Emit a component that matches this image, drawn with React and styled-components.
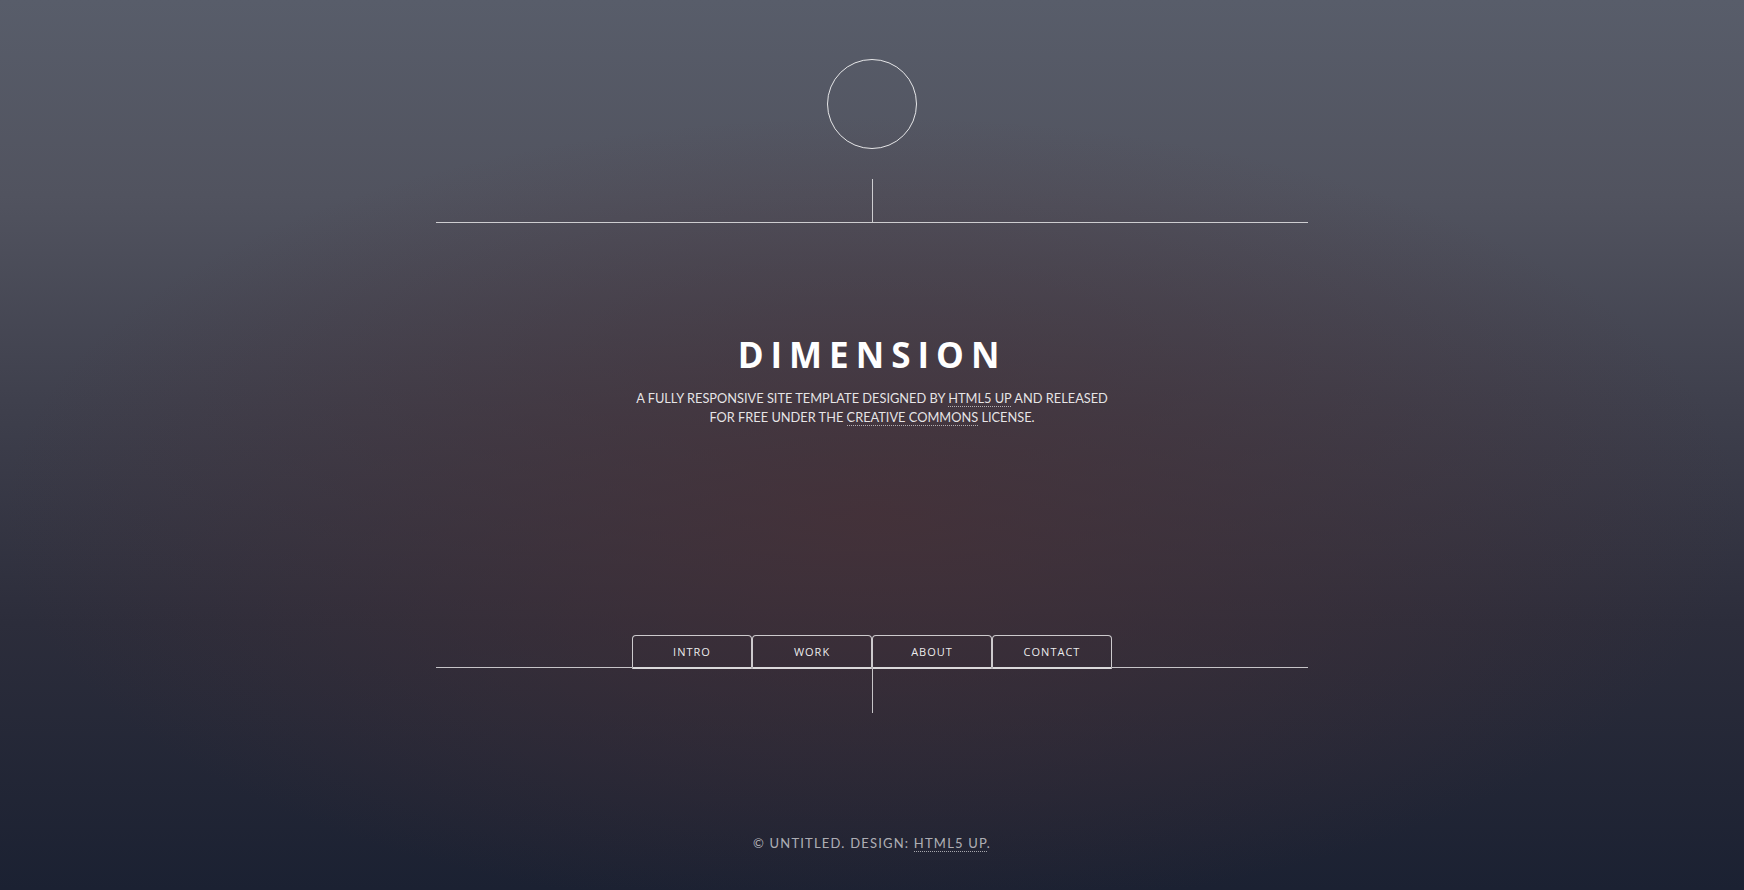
import React from "react";
import styled, { createGlobalStyle } from "styled-components";

const Global = createGlobalStyle`
  html, body { margin: 0; padding: 0; }
  body {
    background: #1b2030;
    font-family: Lato, "Open Sans", sans-serif;
    color: #fff;
  }
`;

const Page = styled.div`
  position: relative;
  min-height: 890px;
  display: flex;
  flex-direction: column;
  align-items: center;
  background:
    radial-gradient(ellipse 50% 45% at 50% 58%, rgba(72, 48, 54, 0.75), rgba(72, 48, 54, 0) 100%),
    linear-gradient(to bottom, #585d6a 0%, #51535f 22%, #3f404d 45%, #2c2d3b 70%, #1b2132 100%);
  overflow: hidden;
`;

const Logo = styled.div`
  margin-top: 59px;
  width: 88px;
  height: 88px;
  border: 1px solid rgba(255, 255, 255, 0.85);
  border-radius: 50%;
`;

const Stem = styled.div`
  width: 1px;
  height: ${(p) => p.$h}px;
  margin-top: ${(p) => p.$mt || 0}px;
  background: rgba(255, 255, 255, 0.72);
`;

const Content = styled.div`
  width: 872px;
  height: 413px;
  border-top: 1px solid rgba(255, 255, 255, 0.72);
  box-sizing: border-box;
  display: flex;
  flex-direction: column;
  align-items: center;
  padding-top: 108px;
`;

const Title = styled.h1`
  margin: 0;
  font-family: "Open Sans", sans-serif;
  font-weight: 700;
  font-size: 35px;
  line-height: 48px;
  letter-spacing: 7px;
  color: #fff;
`;

const Sub = styled.p`
  margin: 10px 0 0;
  font-family: Lato, sans-serif;
  font-size: 12.8px;
  line-height: 18.5px;
  text-align: center;
  text-transform: uppercase;
  color: rgba(255, 255, 255, 0.88);
`;

const Link = styled.a`
  color: inherit;
  text-decoration: none;
  border-bottom: 1px dotted rgba(255, 255, 255, 0.6);
`;

const NavRow = styled.div`
  width: 872px;
  display: flex;
  align-items: flex-end;
`;

const Line = styled.div`
  flex: 1;
  height: 1px;
  margin-bottom: 1px;
  background: rgba(255, 255, 255, 0.72);
`;

const Nav = styled.nav`
  display: flex;
`;

const NavButton = styled.a`
  width: 120px;
  height: 34px;
  box-sizing: border-box;
  display: flex;
  align-items: center;
  justify-content: center;
  border: 1px solid rgba(255, 255, 255, 0.75);
  border-bottom: 2px solid rgba(255, 255, 255, 0.82);
  border-radius: 4px 4px 0 0;
  font-family: "Open Sans", sans-serif;
  font-size: 11px;
  font-weight: 500;
  letter-spacing: 1px;
  color: rgba(255, 255, 255, 0.92);
  text-decoration: none;
`;

const Footer = styled.footer`
  margin-top: 120px;
  font-family: Lato, sans-serif;
  font-size: 13px;
  line-height: 20px;
  letter-spacing: 1.2px;
  text-transform: uppercase;
  color: rgba(255, 255, 255, 0.65);
`;

export default function App() {
  return (
    <>
      <Global />
      <Page>
        <Logo />
        <Stem $h={43} $mt={30} />
        <Content>
          <Title>DIMENSION</Title>
          <Sub>
            A fully responsive site template designed by <Link href="#">HTML5 UP</Link> and released
            <br />
            for free under the <Link href="#">Creative Commons</Link> license.
          </Sub>
        </Content>
        <NavRow>
          <Line />
          <Nav>
            <NavButton href="#">INTRO</NavButton>
            <NavButton href="#">WORK</NavButton>
            <NavButton href="#">ABOUT</NavButton>
            <NavButton href="#">CONTACT</NavButton>
          </Nav>
          <Line />
        </NavRow>
        <Stem $h={44} />
        <Footer>
          © Untitled. Design: <Link href="#">HTML5 UP</Link>.
        </Footer>
      </Page>
    </>
  );
}
